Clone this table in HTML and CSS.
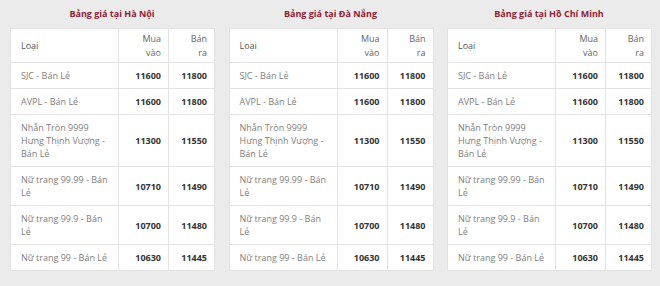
FILE: index.html
```html
<!DOCTYPE html>
<html lang="vi">
<head>
<meta charset="utf-8">
<link rel="stylesheet" href="styles.css">
</head>
<body>
<div class="wrap">
  <section class="board">
    <h3 class="title">Bảng giá tại Hà Nội</h3>
    <table class="price">
      <colgroup><col class="c1"><col class="c2"><col class="c3"></colgroup>
      <thead><tr><th class="name">Loại</th><th>Mua<br>vào</th><th>Bán<br>ra</th></tr></thead>
      <tbody>
        <tr><td class="name">SJC - Bán Lẻ</td><td>11600</td><td>11800</td></tr>
        <tr><td class="name">AVPL - Bán Lẻ</td><td>11600</td><td>11800</td></tr>
        <tr><td class="name">Nhẫn Tròn 9999 Hưng Thịnh Vượng - Bán Lẻ</td><td>11300</td><td>11550</td></tr>
        <tr><td class="name">Nữ trang 99.99 - Bán Lẻ</td><td>10710</td><td>11490</td></tr>
        <tr><td class="name">Nữ trang 99.9 - Bán Lẻ</td><td>10700</td><td>11480</td></tr>
        <tr><td class="name">Nữ trang 99 - Bán Lẻ</td><td>10630</td><td>11445</td></tr>
      </tbody>
    </table>
  </section>
  <section class="board">
    <h3 class="title">Bảng giá tại Đà Nẵng</h3>
    <table class="price">
      <colgroup><col class="c1"><col class="c2"><col class="c3"></colgroup>
      <thead><tr><th class="name">Loại</th><th>Mua<br>vào</th><th>Bán<br>ra</th></tr></thead>
      <tbody>
        <tr><td class="name">SJC - Bán Lẻ</td><td>11600</td><td>11800</td></tr>
        <tr><td class="name">AVPL - Bán Lẻ</td><td>11600</td><td>11800</td></tr>
        <tr><td class="name">Nhẫn Tròn 9999 Hưng Thịnh Vượng - Bán Lẻ</td><td>11300</td><td>11550</td></tr>
        <tr><td class="name">Nữ trang 99.99 - Bán Lẻ</td><td>10710</td><td>11490</td></tr>
        <tr><td class="name">Nữ trang 99.9 - Bán Lẻ</td><td>10700</td><td>11480</td></tr>
        <tr><td class="name">Nữ trang 99 - Bán Lẻ</td><td>10630</td><td>11445</td></tr>
      </tbody>
    </table>
  </section>
  <section class="board">
    <h3 class="title">Bảng giá tại Hồ Chí Minh</h3>
    <table class="price">
      <colgroup><col class="c1"><col class="c2"><col class="c3"></colgroup>
      <thead><tr><th class="name">Loại</th><th>Mua<br>vào</th><th>Bán<br>ra</th></tr></thead>
      <tbody>
        <tr><td class="name">SJC - Bán Lẻ</td><td>11600</td><td>11800</td></tr>
        <tr><td class="name">AVPL - Bán Lẻ</td><td>11600</td><td>11800</td></tr>
        <tr><td class="name">Nhẫn Tròn 9999 Hưng Thịnh Vượng - Bán Lẻ</td><td>11300</td><td>11550</td></tr>
        <tr><td class="name">Nữ trang 99.99 - Bán Lẻ</td><td>10710</td><td>11490</td></tr>
        <tr><td class="name">Nữ trang 99.9 - Bán Lẻ</td><td>10700</td><td>11480</td></tr>
        <tr><td class="name">Nữ trang 99 - Bán Lẻ</td><td>10630</td><td>11445</td></tr>
      </tbody>
    </table>
  </section>
</div>
</body>
</html>
```
FILE: styles.css
```css
html, body {
  margin: 0;
  padding: 0;
  background: #ebebeb;
}
body {
  font-family: "Open Sans", "Noto Sans", sans-serif;
  font-size: 9px;
  color: #333;
}
.wrap {
  display: grid;
  grid-template-columns: repeat(3, 204px);
  column-gap: 14.5px;
  padding-left: 10px;
}
.title {
  margin: 0;
  height: 28px;
  line-height: 28px;
  text-align: center;
  font-size: 9px;
  font-weight: 700;
  color: #8e2235;
}
.price {
  width: 204px;
  border-collapse: collapse;
  table-layout: fixed;
  background: #fff;
}
.c1 { width: 108px; }
.c2 { width: 50px; }
.c3 { width: 46px; }
.price th,
.price td {
  border: 1px solid #e3e3e3;
  line-height: 13px;
  text-align: right;
  padding: 6px 7px 6px 8px;
  vertical-align: middle;
}
.price th {
  padding-top: 3px;
  padding-bottom: 3px;
  font-weight: 400;
  color: #666;
  font-size: 9px;
  line-height: 13.5px;
}
.price td {
  font-weight: 700;
  color: #333;
}
.price .name {
  text-align: left;
  padding-left: 10px;
  padding-right: 8px;
}
.price td.name {
  font-weight: 400;
  color: #808080;
}
.price th.name {
  color: #555;
}
```
